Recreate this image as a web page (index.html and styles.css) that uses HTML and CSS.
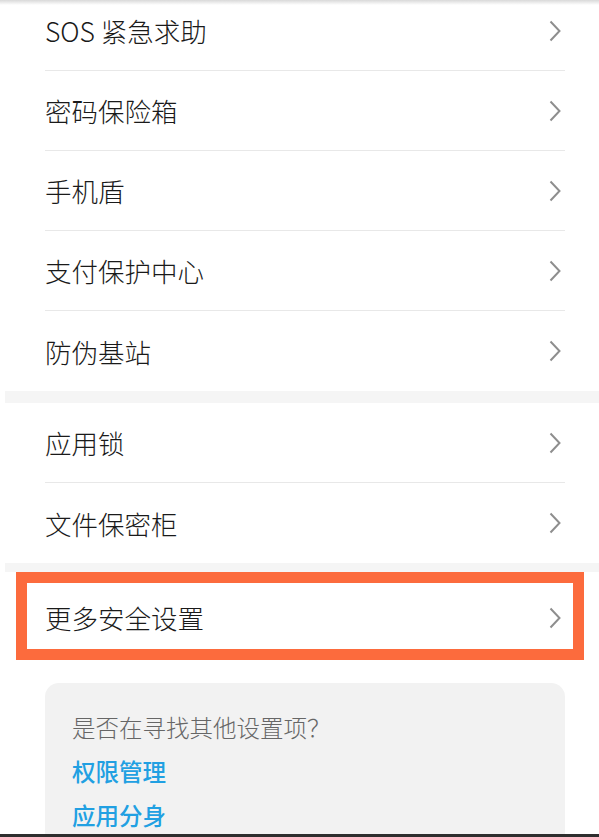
FILE: index.html
```html
<!DOCTYPE html>
<html lang="zh-CN">
<head>
<meta charset="utf-8">
<link rel="stylesheet" href="styles.css">
</head>
<body>
<div class="top-shade"></div>
<div class="list first">
  <div class="row"><div class="inner"><span>SOS 紧急求助</span><svg class="chev" viewBox="0 0 12 22"><path d="M1.5 1.5 L10.5 11 L1.5 20.5"/></svg></div></div>
  <div class="row"><div class="inner"><span>密码保险箱</span><svg class="chev" viewBox="0 0 12 22"><path d="M1.5 1.5 L10.5 11 L1.5 20.5"/></svg></div></div>
  <div class="row"><div class="inner"><span>手机盾</span><svg class="chev" viewBox="0 0 12 22"><path d="M1.5 1.5 L10.5 11 L1.5 20.5"/></svg></div></div>
  <div class="row"><div class="inner"><span>支付保护中心</span><svg class="chev" viewBox="0 0 12 22"><path d="M1.5 1.5 L10.5 11 L1.5 20.5"/></svg></div></div>
  <div class="row last"><div class="inner"><span>防伪基站</span><svg class="chev" viewBox="0 0 12 22"><path d="M1.5 1.5 L10.5 11 L1.5 20.5"/></svg></div></div>
</div>
<div class="band big"></div>
<div class="list">
  <div class="row"><div class="inner"><span>应用锁</span><svg class="chev" viewBox="0 0 12 22"><path d="M1.5 1.5 L10.5 11 L1.5 20.5"/></svg></div></div>
  <div class="row last"><div class="inner"><span>文件保密柜</span><svg class="chev" viewBox="0 0 12 22"><path d="M1.5 1.5 L10.5 11 L1.5 20.5"/></svg></div></div>
</div>
<div class="band small"></div>
<div class="highlight">
  <span>更多安全设置</span><svg class="chev" viewBox="0 0 12 22"><path d="M1.5 1.5 L10.5 11 L1.5 20.5"/></svg>
</div>
<div class="card">
  <div class="hint">是否在寻找其他设置项？</div>
  <div class="link">权限管理</div>
  <div class="link">应用分身</div>
</div>
<div class="bottom-bar"></div>
</body>
</html>
```

FILE: styles.css
```css
html, body {
  margin: 0;
  padding: 0;
  background: #ffffff;
  overflow: hidden;
  height: 837px;
}
body {
  font-family: "Noto Sans CJK SC", "Noto Sans", sans-serif;
  color: #1a1a1a;
}
.top-shade {
  position: absolute;
  top: 0;
  left: 0;
  right: 0;
  height: 5px;
  background: linear-gradient(#d9d9d9, rgba(255,255,255,0));
  z-index: 2;
}
.list.first {
  margin-top: -9px;
}
.row {
  height: 80px;
  padding: 0 34px 0 45px;
}
.inner {
  height: 100%;
  box-sizing: border-box;
  border-bottom: 1.5px solid #e8e8e8;
  display: flex;
  align-items: center;
  justify-content: space-between;
  padding-right: 4px;
  font-size: 26.5px;
  font-weight: 300;
}
.row.last .inner {
  border-bottom: none;
}
.chev {
  width: 12px;
  height: 22px;
  flex: none;
}
.chev path {
  fill: none;
  stroke: #8e8e8e;
  stroke-width: 2;
}
.band {
  background: #f5f5f5;
  margin-left: 5px;
}
.band.big { height: 12px; }
.band.small { height: 9px; }
.highlight {
  box-sizing: border-box;
  margin-left: 16px;
  width: 568px;
  height: 88px;
  border: 11px solid #fc6b3d;
  display: flex;
  align-items: center;
  justify-content: space-between;
  padding: 3px 12px 0 18px;
  font-size: 26.5px;
  font-weight: 300;
}
.card {
  margin: 23px 34px 0 45px;
  background: #f2f2f2;
  border-radius: 14px;
  padding: 28px 27px 40px;
  display: flex;
  flex-direction: column;
  gap: 12px;
}
.hint {
  font-size: 23.5px;
  line-height: 32px;
  color: #666666;
  font-weight: 300;
}
.link {
  font-size: 23.5px;
  line-height: 32px;
  color: #21a0e2;
  font-weight: 500;
}
.bottom-bar {
  position: fixed;
  left: 0;
  right: 0;
  bottom: 0;
  height: 3px;
  background: #2e2e2e;
}
```
